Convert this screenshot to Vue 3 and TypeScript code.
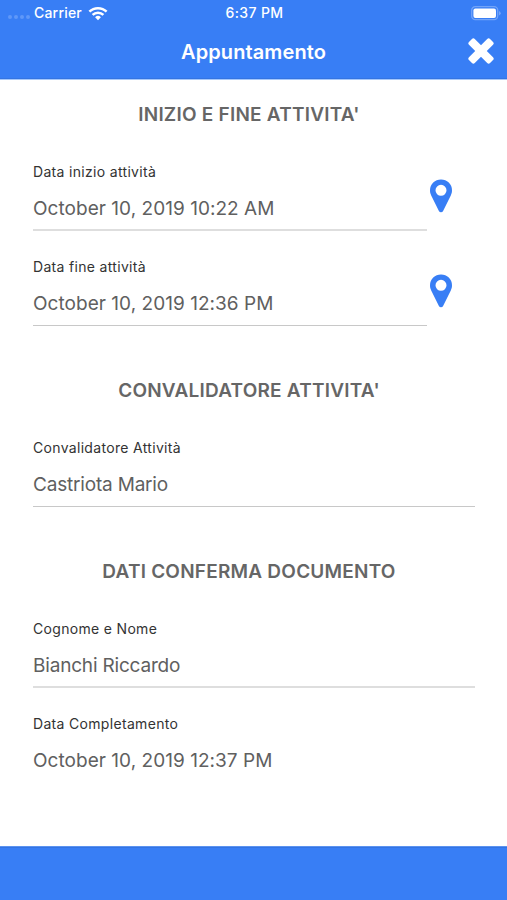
<script setup lang="ts">
interface Field {
  label: string
  value: string
  kind: 'date' | 'name'
  located?: boolean
  line?: 'soft' | 'thin' | 'none'
}

interface Section {
  title: string
  fields: Field[]
}

const sections: Section[] = [
  {
    title: "INIZIO E FINE ATTIVITA'",
    fields: [
      { label: 'Data inizio attività', value: 'October 10, 2019 10:22 AM', kind: 'date', located: true, line: 'soft' },
      { label: 'Data fine attività', value: 'October 10, 2019 12:36 PM', kind: 'date', located: true, line: 'thin' },
    ],
  },
  {
    title: "CONVALIDATORE ATTIVITA'",
    fields: [{ label: 'Convalidatore Attività', value: 'Castriota Mario', kind: 'name', line: 'thin' }],
  },
  {
    title: 'DATI CONFERMA DOCUMENTO',
    fields: [
      { label: 'Cognome e Nome', value: 'Bianchi Riccardo', kind: 'name', line: 'soft' },
      { label: 'Data Completamento', value: 'October 10, 2019 12:37 PM', kind: 'date', line: 'none' },
    ],
  },
]
</script>

<template>
  <div class="screen">
    <header class="header">
      <div class="status">
        <div class="carrier">
          <span class="signal"><i v-for="n in 4" :key="n"></i></span>
          <span class="carrier-name">Carrier</span>
          <svg class="wifi" width="20" height="15" viewBox="0 0 20 15">
            <g fill="none" stroke="#fff" stroke-width="2.5">
              <path d="M1.4 5.7A12.2 12.2 0 0 1 18.6 5.7" />
              <path d="M4.6 8.9A7.7 7.7 0 0 1 15.4 8.9" />
            </g>
            <path d="M10 14.2L7.1 11.3A4.1 4.1 0 0 1 12.9 11.3Z" fill="#fff" />
          </svg>
        </div>
        <span class="time">6:37 PM</span>
        <div class="power">
          <svg width="30" height="15" viewBox="0 0 30 15">
            <rect x="0.7" y="0.7" width="26" height="13" rx="3.6" fill="none" stroke="#72a4f8" stroke-width="1.3" />
            <rect x="2.4" y="2.4" width="22.6" height="9.6" rx="2" fill="#fff" />
            <path d="M28.2 5v4.6q1.4-.8 1.4-2.3T28.2 5z" fill="#83aefa" />
          </svg>
        </div>
      </div>
      <div class="navbar">
        <h1 class="title">Appuntamento</h1>
        <button class="close" type="button" aria-label="Chiudi">
          <svg width="26" height="26" viewBox="0 0 26 26">
            <g fill="#fff">
              <rect x="-1.9" y="8.9" width="29.8" height="8.2" rx="2" transform="rotate(45 13 13)" />
              <rect x="-1.9" y="8.9" width="29.8" height="8.2" rx="2" transform="rotate(-45 13 13)" />
            </g>
          </svg>
        </button>
      </div>
    </header>

    <main class="content">
      <section v-for="section in sections" :key="section.title" class="section">
        <h2 class="heading">{{ section.title }}</h2>
        <div v-for="field in section.fields" :key="field.label" class="row">
          <div class="field" :class="field.line">
            <span class="label">{{ field.label }}</span>
            <span class="value" :class="field.kind">{{ field.value }}</span>
          </div>
          <div v-if="field.located" class="place">
            <svg width="22" height="34" viewBox="0 0 22 34">
              <path
                fill-rule="evenodd"
                d="M11 .4A10.9 10.9 0 0 0 0 11.3C0 13.3.4 14.7 1.2 16.4L8.9 31.9Q9.6 33.3 11 33.3T13.1 31.9L20.8 16.4C21.6 14.7 22 13.3 22 11.3A10.9 10.9 0 0 0 11 .4ZM11 5.8A5.5 5.5 0 1 1 11 16.8A5.5 5.5 0 0 1 11 5.8Z"
                fill="#387ef5"
              />
            </svg>
          </div>
        </div>
      </section>
    </main>

    <footer class="footer"></footer>
  </div>
</template>

<style>
body {
  margin: 0;
  background: #fff;
}
</style>

<style scoped>
.screen {
  display: flex;
  flex-direction: column;
  width: 507px;
  height: 900px;
  overflow: hidden;
  background: #fff;
  font-family: Inter, 'Liberation Sans', sans-serif;
}

.header {
  box-sizing: border-box;
  flex: none;
  height: 80px;
  background: #387ef5;
  border-bottom: 1px solid #a5c7fb;
  box-shadow: inset 0 -1px 0 #3474e2;
  color: #fff;
}

.status {
  display: grid;
  grid-template-columns: 1fr auto 1fr;
  align-items: center;
  height: 26px;
  padding: 0 6px 0 8px;
  font-size: 14px;
  line-height: 26px;
}

.carrier {
  display: flex;
  align-items: center;
}

.signal {
  display: flex;
  gap: 2px;
  width: 26px;
  padding-top: 8px;
}

.signal i {
  width: 4px;
  height: 4px;
  border-radius: 50%;
  background: #5f98f8;
}

.carrier-name {
  width: 54px;
  font-weight: 500;
  letter-spacing: 0.2px;
}

.time {
  font-weight: 500;
  letter-spacing: 0.35px;
}

.power {
  display: flex;
  justify-content: flex-end;
}

.navbar {
  display: grid;
  grid-template-columns: 1fr auto 1fr;
  align-items: center;
  height: 52px;
  padding: 0 13px;
}

.title {
  grid-column: 2;
  margin: 0;
  font-size: 20px;
  font-weight: 600;
  line-height: 52px;
  letter-spacing: 0.1px;
}

.close {
  display: flex;
  justify-self: end;
  margin-top: -2px;
  padding: 0;
  border: 0;
  background: none;
}

.content {
  flex: 1;
  padding: 0 32px 0 33px;
}

.heading {
  height: 56px;
  margin: 0;
  padding-right: 10px;
  box-sizing: border-box;
  padding-top: 23px;
  color: #666;
  font-size: 19px;
  font-weight: 600;
  line-height: 24px;
  letter-spacing: 0.22px;
  text-align: center;
}

.section + .section .heading {
  height: 86px;
  padding-top: 53px;
}

.row {
  display: flex;
  height: 95px;
}

.field {
  display: flex;
  flex: 1;
  flex-direction: column;
  box-sizing: border-box;
  padding-top: 26px;
}

.soft {
  border-bottom: 2px solid #dedede;
}

.thin {
  border-bottom: 1px solid #c8c8c8;
}

.label {
  color: #333;
  font-size: 14px;
  line-height: 20px;
  letter-spacing: 0.32px;
}

.value {
  margin-top: 14px;
  color: #606060;
  font-size: 19px;
  line-height: 26px;
}

.date {
  letter-spacing: 0.04px;
}

.name {
  letter-spacing: -0.19px;
}

.place {
  width: 45px;
  padding: 43px 0 0 3px;
}

.footer {
  flex: none;
  box-sizing: border-box;
  height: 54px;
  border-top: 1px solid #5b93f1;
  background: #387ef5;
  box-shadow: inset 0 1px 0 #3474e2;
}
</style>
